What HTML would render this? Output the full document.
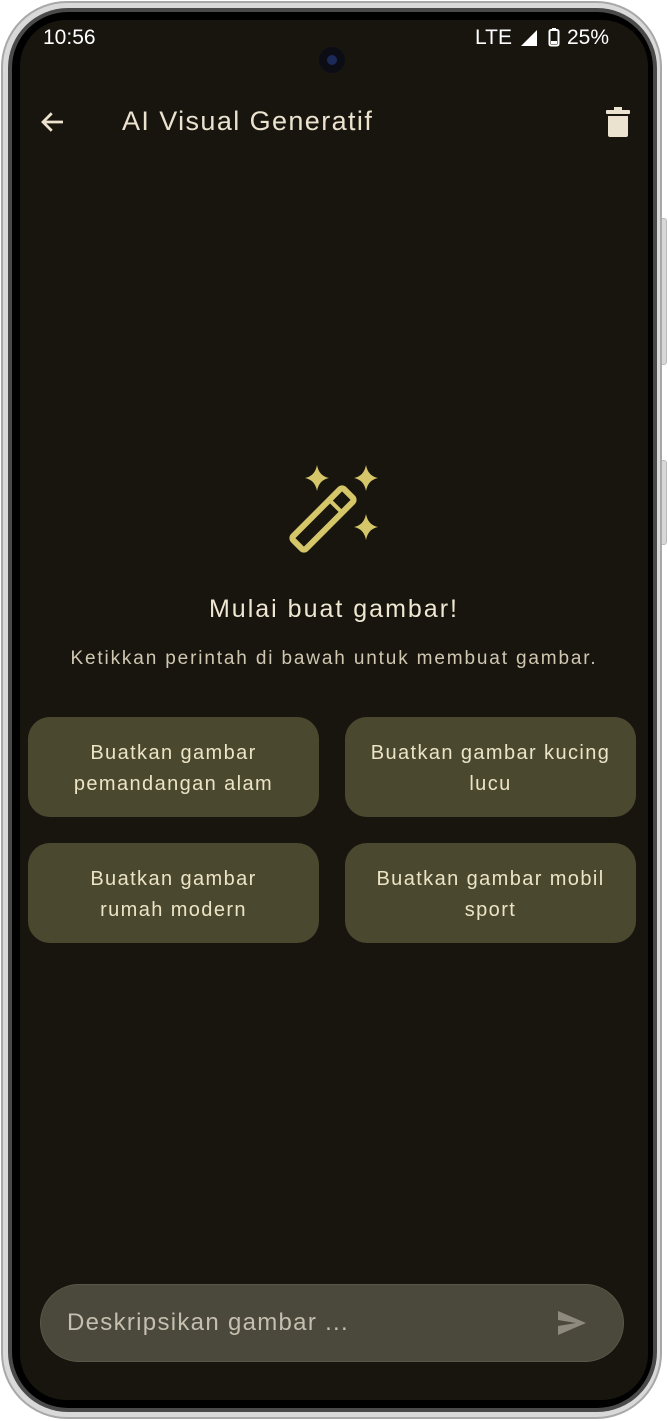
<!DOCTYPE html>
<html><head><meta charset="utf-8"><style>
*{margin:0;padding:0;box-sizing:border-box}
body{width:668px;height:1421px;background:#fff;position:relative;overflow:hidden;font-family:"Liberation Sans",sans-serif}
.btn{position:absolute;left:660px;width:7px;background:#d8d8d8;border-radius:0 3px 3px 0;border:1px solid #bbb}
.outer{position:absolute;left:1px;top:1px;width:661px;height:1418px;border-radius:66px;background:#d9d9d9;border:2px solid #a8a8a8}
.mid{position:absolute;left:8px;top:8px;width:649px;height:1404px;border-radius:60px;background:#4a4a4a}
.blk{position:absolute;left:12px;top:12px;width:641px;height:1396px;border-radius:56px;background:#000}
.scr{position:absolute;left:20px;top:20px;width:628px;height:1380px;border-radius:46px;background:#18150e;overflow:hidden;color:#ebe3cf}
.t{position:absolute;white-space:nowrap}
.card{position:absolute;width:291px;height:100px;border-radius:22px;background:#4b4830;color:#ece4c6;font-size:20px;line-height:31px;text-align:center;display:flex;align-items:center;justify-content:center;letter-spacing:1.4px;padding-top:4px}
</style></head><body>
<div class="btn" style="top:218px;height:147px"></div>
<div class="btn" style="top:460px;height:85px"></div>
<div class="outer"></div><div class="mid"></div><div class="blk"></div>
<div class="scr">
 <div class="t" style="left:23px;top:6px;font-size:21px;color:#fff">10:56</div>
 <div class="t" style="left:455px;top:6px;font-size:21px;color:#fff">LTE</div>
 <svg style="position:absolute;left:500px;top:9px" width="18" height="18"><path d="M17 1V17H1Z" fill="#fff"/></svg>
 <svg style="position:absolute;left:528px;top:7px" width="12" height="20"><rect x="1.5" y="3" width="9" height="15.5" rx="1.5" fill="none" stroke="#fff" stroke-width="2"/><rect x="4" y="1" width="4" height="2" fill="#fff"/><rect x="3" y="14" width="6" height="3" fill="#fff"/></svg>
 <div class="t" style="left:547px;top:6px;font-size:21px;color:#fff">25%</div>
 <div style="position:absolute;left:299px;top:27px;width:26px;height:26px;border-radius:50%;background:#0c0c14"><div style="position:absolute;left:8px;top:8px;width:10px;height:10px;border-radius:50%;background:#1c2a5a"></div></div>
 <svg style="position:absolute;left:18px;top:87px" width="30" height="30" viewBox="0 0 24 24"><path d="M20 12H5M11 5l-7 7 7 7" fill="none" stroke="#ebe3cf" stroke-width="2.2"/></svg>
 <div class="t" style="left:102px;top:86px;font-size:27px;letter-spacing:1.4px">AI Visual Generatif</div>
 <svg style="position:absolute;left:584px;top:86px" width="28" height="32" viewBox="0 0 28 32"><rect x="10" y="1" width="8" height="3" fill="#ebe3cf"/><rect x="2" y="4" width="24" height="4" rx="1" fill="#ebe3cf"/><path d="M4 10H24V29Q24 31 22 31H6Q4 31 4 29Z" fill="#ebe3cf"/></svg>
 <svg style="position:absolute;left:250px;top:430px" width="130" height="130" viewBox="270 450 130 130">
  <g fill="#d5c66a">
   <path d="M317 465Q319 476 329 478Q319 480 317 491Q315 480 305 478Q315 476 317 465Z"/>
   <path d="M366 465Q368 476 378 478Q368 480 366 491Q364 480 354 478Q364 476 366 465Z"/>
   <path d="M366 514Q368 525 378 527Q368 529 366 540Q364 529 354 527Q364 525 366 514Z"/>
  </g>
  <g transform="rotate(-45 323 519)"><rect x="287" y="510" width="72" height="18" rx="3" fill="none" stroke="#d5c66a" stroke-width="6"/><rect x="339" y="510" width="4" height="18" fill="#d5c66a"/></g>
 </svg>
 <div class="t" style="left:0;width:628px;text-align:center;top:575px;font-size:25px;color:#efe7d2;letter-spacing:2px">Mulai buat gambar!</div>
 <div class="t" style="left:0;width:628px;text-align:center;top:628px;font-size:19px;color:#cfc7b2;letter-spacing:1.85px">Ketikkan perintah di bawah untuk membuat gambar.</div>
 <div class="card" style="left:8px;top:697px">Buatkan gambar<br>pemandangan alam</div>
 <div class="card" style="left:325px;top:697px">Buatkan gambar kucing<br>lucu</div>
 <div class="card" style="left:8px;top:823px">Buatkan gambar<br>rumah modern</div>
 <div class="card" style="left:325px;top:823px">Buatkan gambar mobil<br>sport</div>
 <div style="position:absolute;left:20px;top:1264px;width:584px;height:78px;border-radius:39px;background:#4b483c;border:1px solid #5a5748"></div>
 <div class="t" style="left:47px;top:1289px;font-size:24px;color:#c4bfae;letter-spacing:1.3px">Deskripsikan gambar ...</div>
 <svg style="position:absolute;left:537px;top:1290px" width="30" height="26" viewBox="0 0 30 26"><path d="M1 1L29 13L1 25L1 16L19 13L1 10Z" fill="#8f8b7c"/></svg>
</div>
</body></html>
